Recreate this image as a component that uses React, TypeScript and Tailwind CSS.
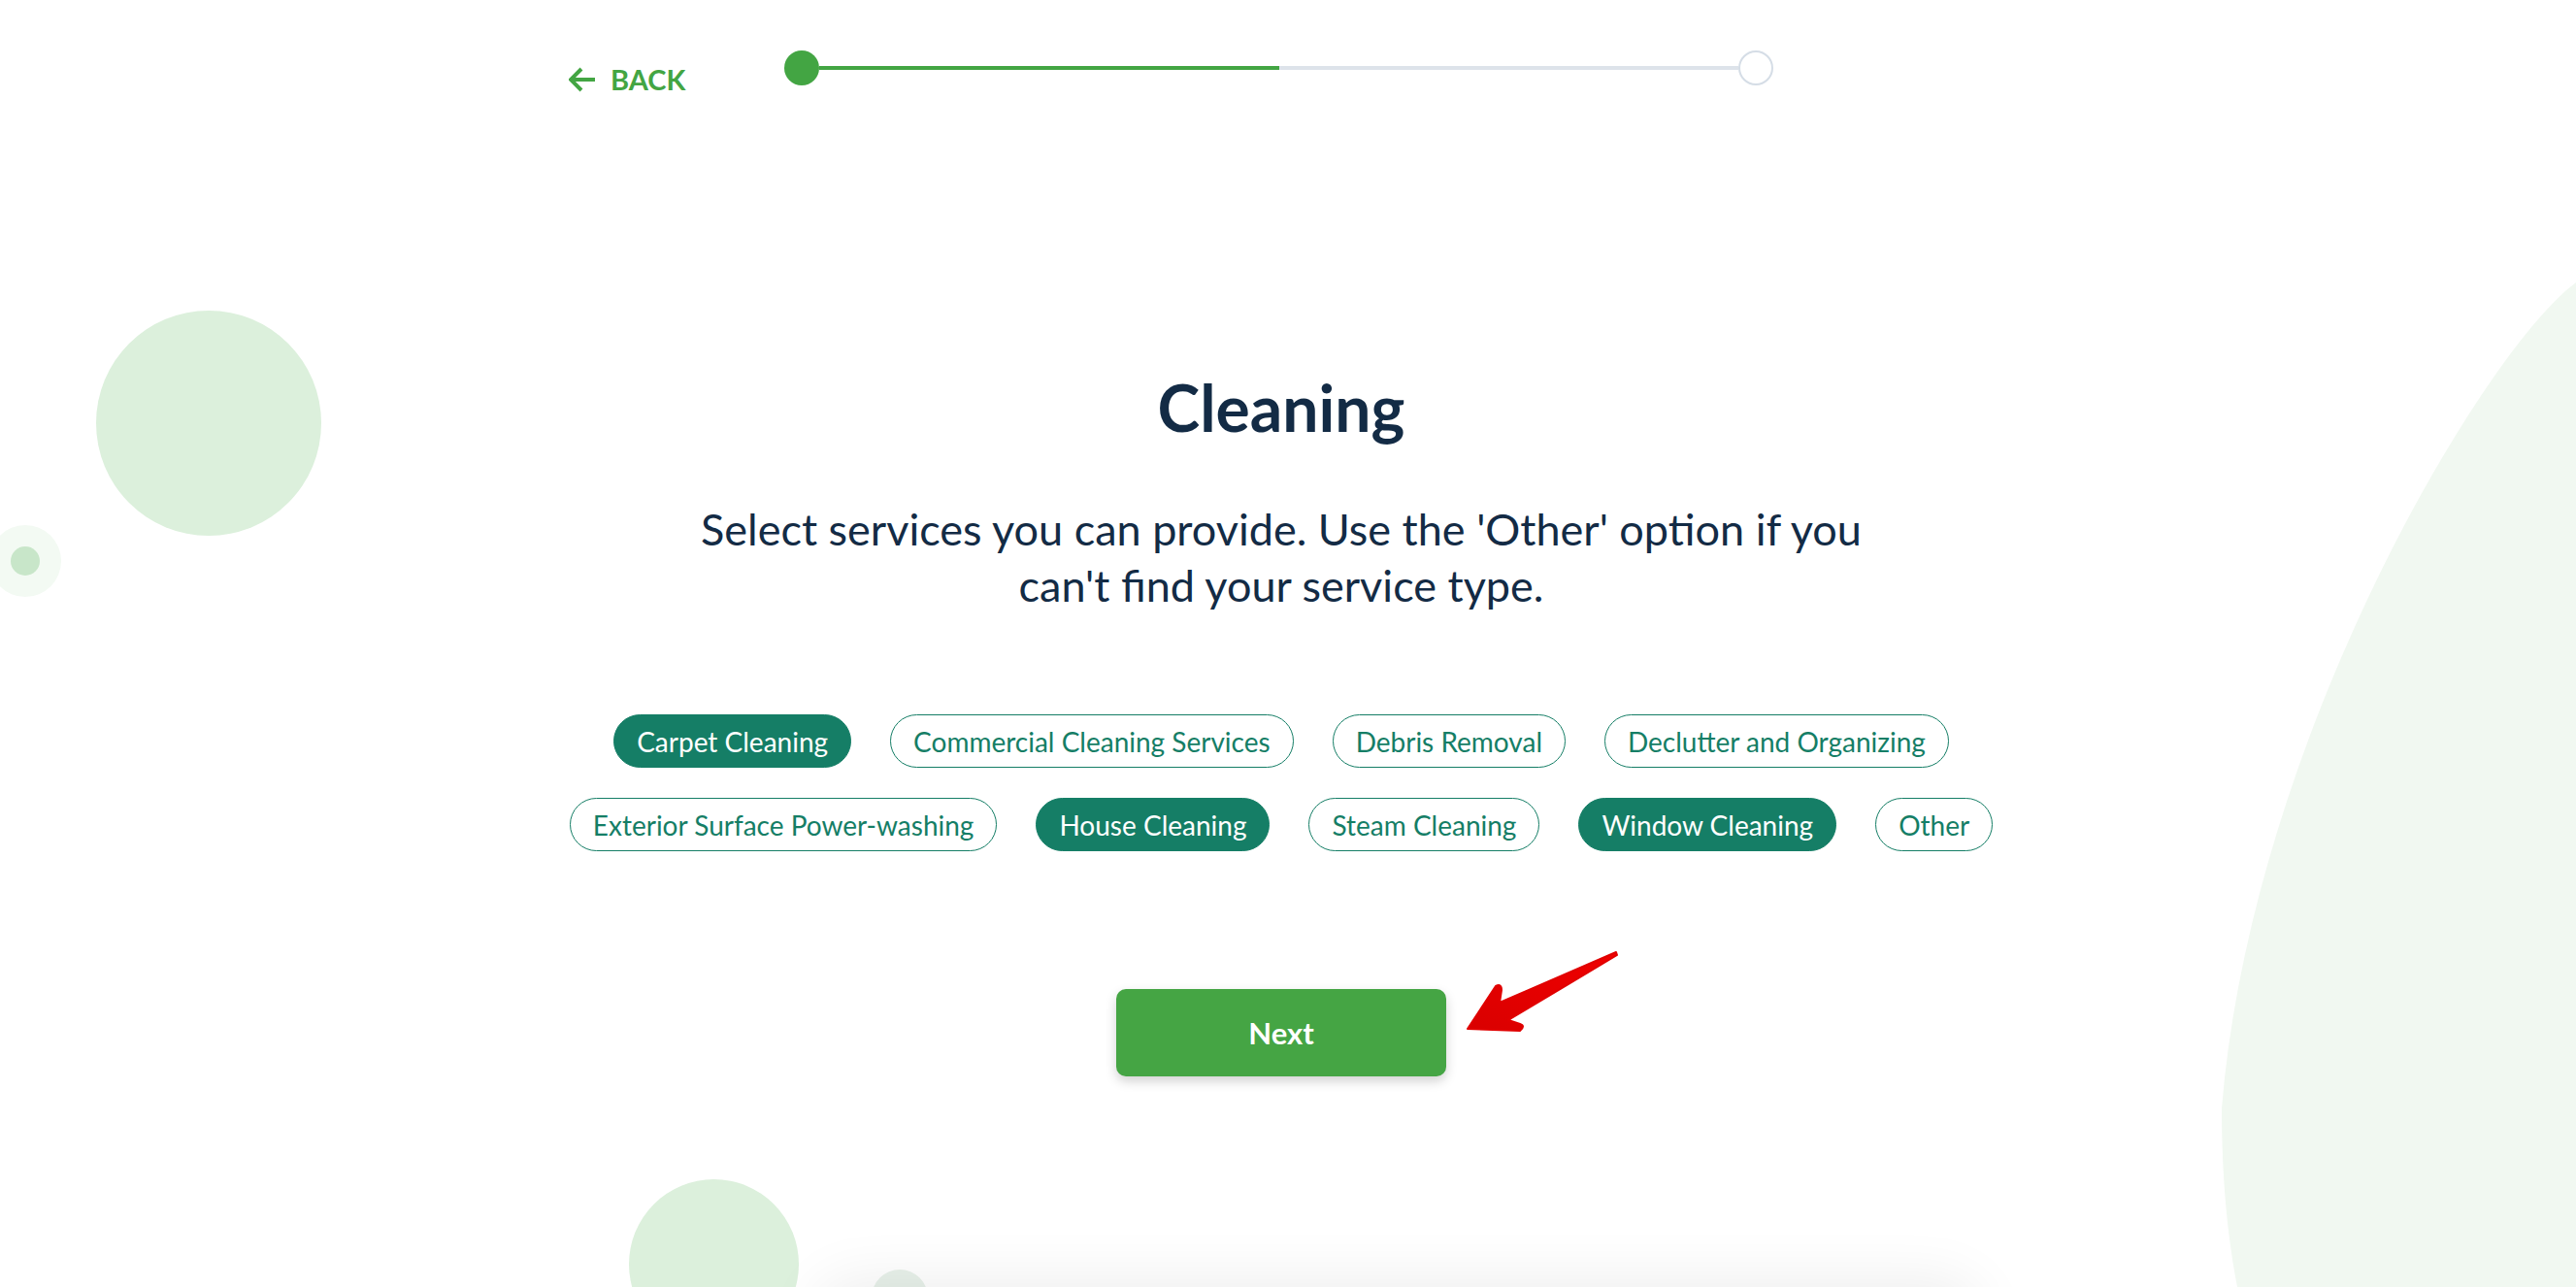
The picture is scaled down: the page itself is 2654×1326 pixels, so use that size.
import React from 'react';

const services = [
  { name: 'Carpet Cleaning', selected: true },
  { name: 'Commercial Cleaning Services', selected: false },
  { name: 'Debris Removal', selected: false },
  { name: 'Declutter and Organizing', selected: false },
  { name: 'Exterior Surface Power-washing', selected: false },
  { name: 'House Cleaning', selected: true },
  { name: 'Steam Cleaning', selected: false },
  { name: 'Window Cleaning', selected: true },
  { name: 'Other', selected: false },
];

function Backdrop() {
  return (
    <>
      <div className="absolute left-[99px] top-[320px] w-[232px] h-[232px] rounded-full bg-[#dcf0dc]" />
      <div className="absolute left-[-11px] top-[541px] w-[74px] h-[74px] rounded-full bg-[#f3faf3] flex items-center justify-center">
        <div className="w-[30px] h-[30px] rounded-full bg-[#c8e6c9]" />
      </div>
      <div className="absolute left-[648px] top-[1215px] w-[175px] h-[175px] rounded-full bg-[#dcf0dc]" />
      <div className="absolute left-[898px] top-[1308px] w-[58px] h-[58px] rounded-full bg-[#e8f1ea]" />
      <div className="absolute left-[840px] top-[1330px] w-[1200px] h-[200px] rounded-[40px] bg-white shadow-[0_-12px_60px_rgba(0,0,0,0.07)]" />
      <svg className="absolute left-0 top-0" width="2654" height="1326" viewBox="0 0 2654 1326">
        <path
          d="M2654 291 C2560 360 2320 760 2289 1142 C2289 1220 2296 1280 2305 1326 L2654 1326 Z"
          fill="#f1f8f1"
        />
      </svg>
    </>
  );
}

function Header() {
  return (
    <div className="relative flex items-start pl-[586px] pt-[52px]">
      <button className="mt-[15px] flex items-center gap-[16px] text-[#43a543] font-bold text-[29px] leading-none">
        <svg width="27" height="26" viewBox="0 0 27 26" fill="none">
          <path d="M13 2 L2 13 L13 24 M2 13 H27" stroke="#43a543" strokeWidth="4" strokeLinejoin="miter" />
        </svg>
        BACK
      </button>
      <div className="ml-[102px] flex items-center w-[1019px] h-[36px]">
        <div className="w-[36px] h-[36px] rounded-full bg-[#43a543] shrink-0" />
        <div className="w-[474px] h-[4px] bg-[#43a543]" />
        <div className="flex-1 h-[4px] bg-[#dde3ea]" />
        <div className="w-[36px] h-[36px] rounded-full border-2 border-[#d5dde6] bg-white shrink-0" />
      </div>
    </div>
  );
}

function ServiceChip({ name, selected }: { name: string; selected: boolean }) {
  return (
    <button
      className={
        selected
          ? 'h-[55px] px-[23px] rounded-full border-[1.5px] border-[#157e66] bg-[#157e66] text-white text-[28px] leading-none'
          : 'h-[55px] px-[23px] rounded-full border-[1.5px] border-[#157e66] bg-white text-[#157e66] text-[28px] leading-none'
      }
    >
      {name}
    </button>
  );
}

export default function App() {
  return (
    <div className="relative w-full h-[1326px] overflow-hidden bg-white font-['Lato',sans-serif]">
      <Backdrop />
      <Header />
      <main className="relative w-[2640px] flex flex-col items-center">
        <h1 className="mt-[291px] text-[66px] leading-none font-bold text-[#132b45]">Cleaning</h1>
        <p className="mt-[63px] text-[45px] leading-[58px] text-[#132b45] text-center">
          Select services you can provide. Use the 'Other' option if you
          <br />
          can't find your service type.
        </p>
        <div className="mt-[104px] w-[1600px] flex flex-wrap justify-center gap-x-[40px] gap-y-[31px]">
          {services.map((s) => (
            <ServiceChip key={s.name} name={s.name} selected={s.selected} />
          ))}
        </div>
        <div className="relative mt-[142px]">
          <button className="w-[340px] h-[90px] rounded-[10px] bg-[#45a544] text-white font-bold text-[31px] shadow-[0_5px_12px_rgba(0,0,0,0.18)]">
            Next
          </button>
          <svg className="absolute left-[350px] top-[-49px]" width="180" height="100" viewBox="0 0 180 100">
            <defs>
              <linearGradient id="redArrow" x1="0" y1="1" x2="1" y2="0">
                <stop offset="0" stopColor="#d90000" />
                <stop offset="1" stopColor="#f00000" />
              </linearGradient>
            </defs>
            <path
              d="M165 11 L45 63 L47 50 Q47 43 41 46 L12 90 L66 92 Q72 87 66 85 L54 81 L166 14 Z"
              fill="url(#redArrow)"
              stroke="#e00000"
              strokeWidth="2"
              strokeLinejoin="round"
            />
          </svg>
        </div>
      </main>
    </div>
  );
}
